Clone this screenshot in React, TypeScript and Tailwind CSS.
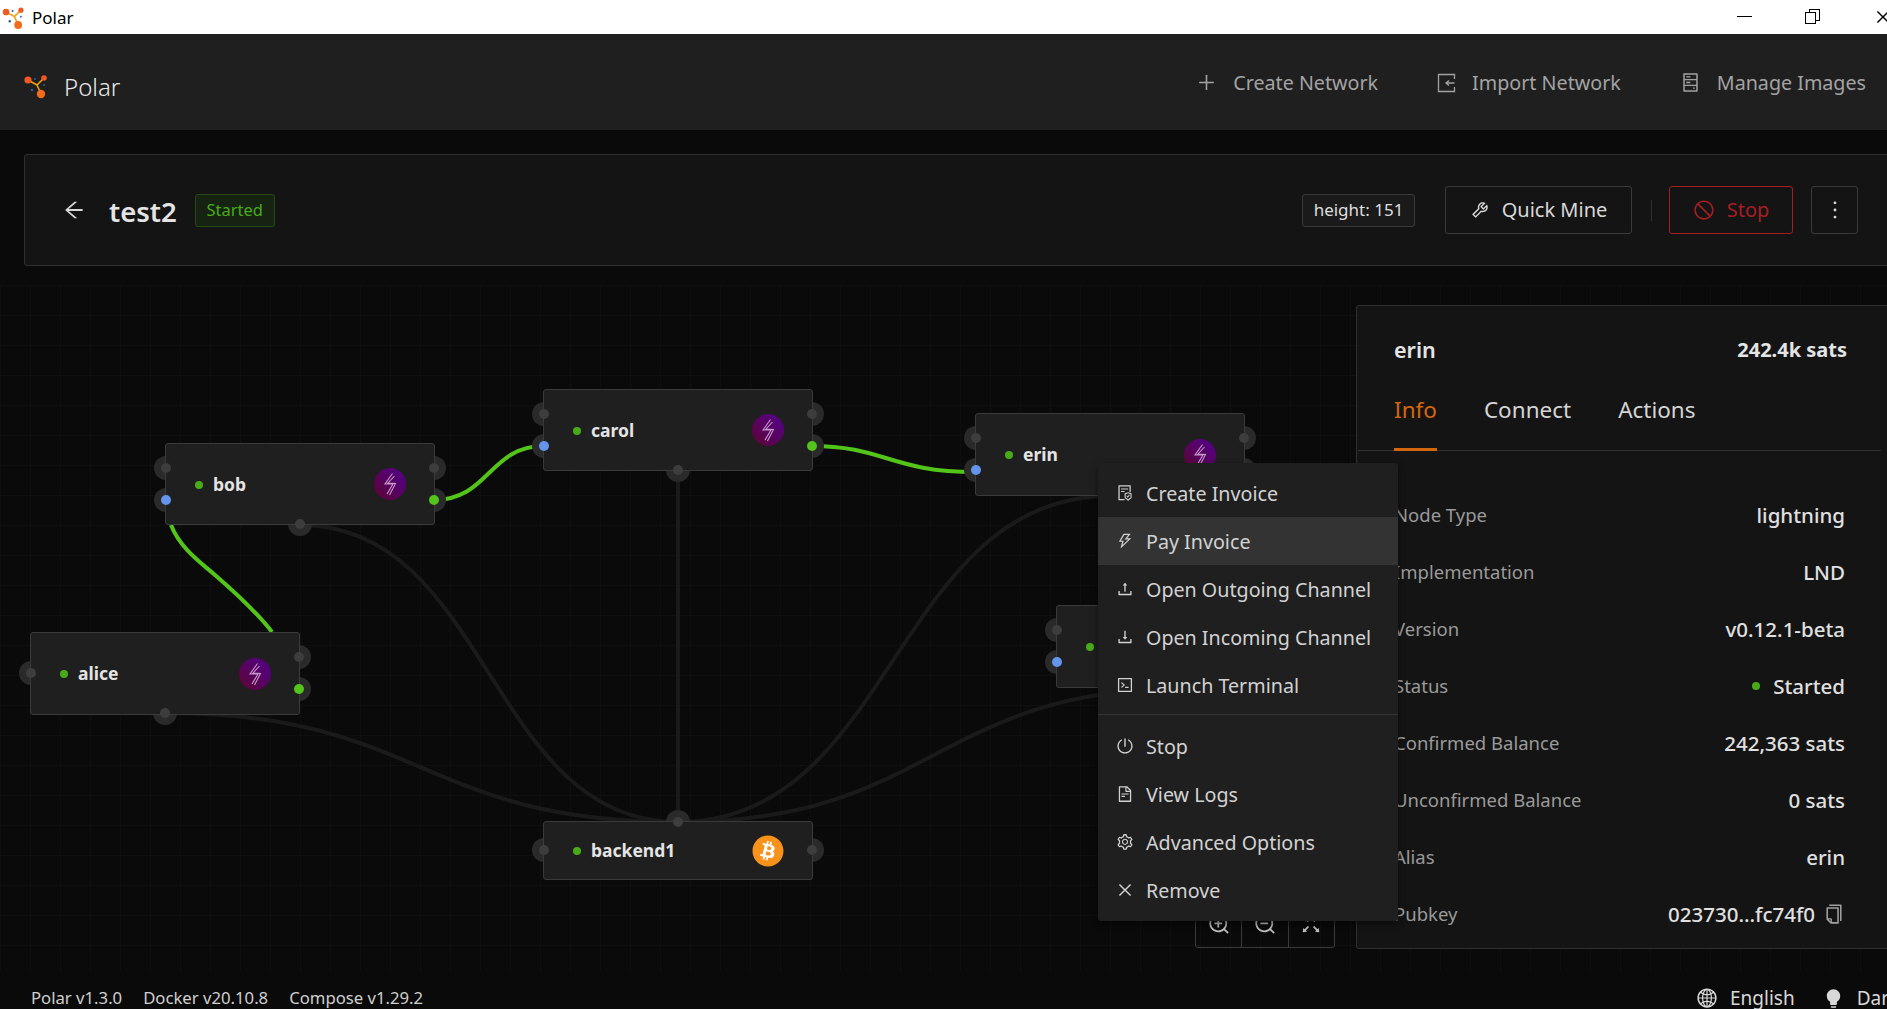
import React from "react";
import {
  AiOutlinePlus, AiOutlineHdd, AiOutlineArrowLeft, AiOutlineTool, AiOutlineStop, AiOutlineMore,
  AiOutlineFileProtect, AiOutlineThunderbolt, AiOutlineUpload, AiOutlineDownload, AiOutlineCode, AiOutlinePoweroff,
  AiOutlineFileText, AiOutlineSetting, AiOutlineClose, AiOutlineZoomIn, AiOutlineZoomOut, AiOutlineFullscreen,
  AiOutlineCopy, AiOutlineGlobal, AiFillBulb,
} from "react-icons/ai";
import { FaBitcoin } from "react-icons/fa";

function Logo({ size }: { size: number }) {
  return (
    <svg width={size} height={size} viewBox="0 0 42 42" className="shrink-0">
      <path d="M13 14 L22 19 L29 12 M22 19 L26 28" stroke="#f0a010" strokeWidth="1.6" fill="none" />
      <circle cx="13" cy="14" r="3.6" fill="#ef5a24" />
      <circle cx="29" cy="12" r="2.8" fill="#ef5a24" />
      <circle cx="26" cy="28" r="4.2" fill="#f26a1b" />
      <circle cx="20" cy="13" r="1.1" fill="#2c5aa0" />
      <circle cx="17" cy="24" r="1.3" fill="#2c5aa0" />
      <circle cx="29" cy="19" r="1" fill="#2c5aa0" />
    </svg>
  );
}

function ImportIcon({ className }: { className?: string }) {
  return (
    <svg width="19" height="20" viewBox="0 0 19 20" fill="none" stroke="currentColor" strokeWidth="1.3" className={className}>
      <path d="M17.5 6V1.5H1.5V18.5H17.5V14" />
      <path d="M17.5 10H9 M12 7.5L9 10L12 12.5" />
    </svg>
  );
}

function Bolt() {
  return (
    <svg width="32" height="32" viewBox="0 0 32 32">
      <defs>
        <linearGradient id="lnd" x1="1" y1="0" x2="0" y2="1">
          <stop offset="0" stopColor="#53008f" />
          <stop offset="1" stopColor="#5c0530" />
        </linearGradient>
      </defs>
      <circle cx="16" cy="16" r="16" fill="url(#lnd)" />
      <path d="M18.5 5.5 L11 16 L19 16 L13 26 M20.5 8 L14 15 L21.5 15.5 L15.5 27" fill="none" stroke="#c79ac9" strokeWidth="1.1" />
    </svg>
  );
}

type Kind = "gray" | "blue" | "green";
type Port = { x: number; y: number; c: Kind };
type NodeData = { name: string; x: number; y: number; h: number; ports: Port[]; btc?: boolean };

const dotColor: Record<Kind, string> = { gray: "#3d3d3d", blue: "#6495ed", green: "#52c41a" };

const lightning = (bottomX = 135): Port[] => [
  { x: 1, y: 25, c: "gray" },
  { x: 1, y: 57, c: "blue" },
  { x: 269, y: 25, c: "gray" },
  { x: 269, y: 57, c: "green" },
  { x: bottomX, y: 81, c: "gray" },
];

const nodes: NodeData[] = [
  { name: "bob", x: 165, y: 443, h: 82, ports: lightning() },
  {
    name: "alice", x: 30, y: 632, h: 83,
    ports: [
      { x: 1, y: 41, c: "gray" },
      { x: 269, y: 25, c: "gray" },
      { x: 269, y: 57, c: "green" },
      { x: 135, y: 81, c: "gray" },
    ],
  },
  { name: "carol", x: 543, y: 389, h: 82, ports: lightning() },
  { name: "erin", x: 975, y: 413, h: 83, ports: lightning() },
  { name: "dave", x: 1056, y: 605, h: 83, ports: lightning() },
  {
    name: "backend1", x: 543, y: 821, h: 59, btc: true,
    ports: [
      { x: 1, y: 29, c: "gray" },
      { x: 269, y: 29, c: "gray" },
      { x: 135, y: 1, c: "gray" },
    ],
  },
];

function FlowNode({ n }: { n: NodeData }) {
  return (
    <div className="absolute w-[270px]" style={{ left: n.x, top: n.y - 285, height: n.h }}>
      {n.ports.map((p, i) => (
        <span key={i} className="absolute w-6 h-6 rounded-full bg-[#2a2a2a]" style={{ left: p.x - 12, top: p.y - 12 }} />
      ))}
      <div className="absolute inset-0 rounded-[3px] bg-[#1f1f1f] border border-[#3a3a3a] flex items-center pl-[29px] pr-[28px]">
        <span className="w-2 h-2 rounded-full bg-[#49aa19] mt-[1px]" />
        <span className="ml-[10px] flex-1 text-[17.5px] font-bold text-[#e4e4e4] leading-none pt-[1px]">{n.name}</span>
        {n.btc ? (
          <span className="w-8 h-8 flex items-center justify-center relative">
            <span className="absolute w-6 h-6 rounded-full bg-white" />
            <FaBitcoin className="text-[32px] text-[#f7931a] absolute" />
          </span>
        ) : (
          <Bolt />
        )}
      </div>
      {n.ports.map((p, i) => (
        <span key={i} className="absolute w-[10px] h-[10px] rounded-full" style={{ left: p.x - 5, top: p.y - 5, backgroundColor: dotColor[p.c] }} />
      ))}
    </div>
  );
}

const menuTop = [
  { icon: AiOutlineFileProtect, label: "Create Invoice" },
  { icon: AiOutlineThunderbolt, label: "Pay Invoice", active: true },
  { icon: AiOutlineUpload, label: "Open Outgoing Channel" },
  { icon: AiOutlineDownload, label: "Open Incoming Channel" },
  { icon: AiOutlineCode, label: "Launch Terminal" },
];
const menuBottom = [
  { icon: AiOutlinePoweroff, label: "Stop" },
  { icon: AiOutlineFileText, label: "View Logs" },
  { icon: AiOutlineSetting, label: "Advanced Options" },
  { icon: AiOutlineClose, label: "Remove" },
];

function MenuItem({ icon: Icon, label, active }: { icon: React.ComponentType<{ className?: string }>; label: string; active?: boolean }) {
  return (
    <div className={`h-12 flex items-center pl-[18px] gap-[12px] text-[19.7px] text-[#d2d2d2] ${active ? "bg-[#333333]" : ""}`}>
      <Icon className="text-[18px] shrink-0" />
      <span className="pt-[2px]">{label}</span>
    </div>
  );
}

const rows: [string, React.ReactNode][] = [
  ["Node Type", "lightning"],
  ["Implementation", "LND"],
  ["Version", "v0.12.1-beta"],
  ["Status", <span className="flex items-center gap-[13px]"><span className="w-2 h-2 rounded-full bg-[#49aa19]" />Started</span>],
  ["Confirmed Balance", "242,363 sats"],
  ["Unconfirmed Balance", "0 sats"],
  ["Alias", "erin"],
  ["Pubkey", <span className="flex items-center gap-2">023730...fc74f0<AiOutlineCopy className="text-[22px] text-[#a0a0a0]" /></span>],
];

function NavItem({ icon: Icon, label }: { icon: React.ComponentType<{ className?: string }>; label: string }) {
  return (
    <div className="flex items-center gap-[16px]">
      <Icon className="text-[21px]" />
      <span>{label}</span>
    </div>
  );
}

export default function App() {
  return (
    <div className="w-[1887px] h-[1009px] overflow-hidden flex flex-col bg-[#0a0a0a] text-[#d8d8d8] font-['Noto_Sans','Open_Sans',sans-serif]">
      {/* Window title bar */}
      <div className="h-[34px] shrink-0 bg-white text-black flex items-center relative overflow-hidden">
        <span className="-ml-[6px] mt-[3px]"><Logo size={39} /></span>
        <span className="-ml-[1px] text-[17px] leading-none">Polar</span>
        <span className="absolute left-[1737px] top-[16px] w-[15px] h-px bg-black" />
        <span className="absolute left-[1809px] top-[9px] w-[11px] h-[12px] border border-black" />
        <span className="absolute left-[1805px] top-[12px] w-[11px] h-[12px] border border-black bg-white" />
        <AiOutlineClose className="absolute left-[1874px] top-[8px] text-[18px]" />
      </div>

      {/* Header */}
      <header className="h-[96px] shrink-0 bg-[#1f1f1f] flex items-center justify-between pl-[15px] pr-[21px]">
        <div className="flex items-center gap-[7px] mt-[10px]">
          <Logo size={42} />
          <span className="text-[24px] font-light text-[#e8e8e8] leading-none">Polar</span>
        </div>
        <div className="flex items-center gap-[59px] text-[19.7px] text-[#a3a3a3] mt-[2px]">
          <NavItem icon={AiOutlinePlus} label="Create Network" />
          <NavItem icon={ImportIcon} label="Import Network" />
          <NavItem icon={AiOutlineHdd} label="Manage Images" />
        </div>
      </header>

      {/* Network card */}
      <div className="h-[112px] shrink-0 mt-[24px] ml-[24px] w-[1880px] bg-[#141414] border border-[#303030] rounded-[3px] flex items-center pl-[37px] pr-[45px]">
        <AiOutlineArrowLeft className="text-[24px] text-[#d8d8d8]" />
        <span className="ml-[23px] text-[27.5px] font-semibold text-[#e4e4e4] leading-none mt-[3px]">test2</span>
        <span className="ml-[18px] h-[33px] w-[80px] flex items-center justify-center rounded-[3px] border border-[#274916] bg-[#162312] text-[#49aa19] text-[16.5px]">Started</span>
        <span className="ml-auto h-[33px] w-[113px] flex items-center justify-center rounded-[3px] border border-[#3a3a3a] bg-[#1a1a1a] text-[17px] text-[#dedede]">height: 151</span>
        <button className="ml-[30px] h-[48px] w-[187px] flex items-center justify-center gap-[12px] rounded-[3px] border border-[#3a3a3a] text-[20px] text-[#d8d8d8]">
          <AiOutlineTool className="text-[20px]" />Quick Mine
        </button>
        <span className="ml-[19px] w-px h-[21px] bg-[#303030]" />
        <button className="ml-[17px] h-[48px] w-[124px] flex items-center justify-center gap-[12px] rounded-[3px] border border-[#a61d24] text-[20px] text-[#a61d24]">
          <AiOutlineStop className="text-[22px]" />Stop
        </button>
        <button className="ml-[18px] h-[48px] w-[47px] flex items-center justify-center rounded-[3px] border border-[#3a3a3a] text-[#d8d8d8]">
          <AiOutlineMore className="text-[26px]" />
        </button>
      </div>

      {/* Designer canvas */}
      <main className="mt-[19px] h-[687px] shrink-0 relative bg-[#0a0a0a] bg-[linear-gradient(#0f0f0f_1px,transparent_1px),linear-gradient(90deg,#0f0f0f_1px,transparent_1px)] bg-[size:30px_30px]">
        <svg className="absolute left-0 top-0" width="1887" height="687" viewBox="0 285 1887 687" fill="none">
          <g stroke="#1a1a1a" strokeWidth="4">
            <path d="M300 525 C 489 525, 489 822, 678 822" />
            <path d="M165 713 C 421 713, 421 822, 678 822" />
            <path d="M678 471 L 678 822" />
            <path d="M1110 496 C 894 496, 894 822, 678 822" />
            <path d="M1190 688 C 934 688, 934 822, 678 822" />
          </g>
          <g stroke="#52c41a" strokeWidth="4">
            <path d="M171 525 C 180 548, 200 562, 215 575 S 255 610, 272 632" />
            <path d="M434 500 C 489 500, 489 446, 544 446" />
            <path d="M811 446 C 885 446, 890 472, 976 472" />
          </g>
        </svg>
        {nodes.map((n) => <FlowNode key={n.name} n={n} />)}

        {/* Zoom controls */}
        <div className="absolute left-[1195px] top-[615px] w-[140px] h-[48px] flex rounded-[3px] border border-[#3a3a3a] text-[#bfbfbf]">
          <div className="flex-1 flex items-center justify-center text-[24px]"><AiOutlineZoomIn /></div>
          <div className="flex-1 flex items-center justify-center text-[24px] border-l border-[#3a3a3a]"><AiOutlineZoomOut /></div>
          <div className="flex-1 flex items-center justify-center text-[24px] border-l border-[#3a3a3a]"><AiOutlineFullscreen /></div>
        </div>

        {/* Sidebar */}
        <aside className="absolute left-[1356px] top-[20px] w-[540px] h-[644px] bg-[#141414] border border-[#303030] rounded-[3px] pt-[24px]">
          <div className="flex justify-between items-center pl-[37px] pr-[48px] h-[40px]">
            <span className="text-[21.5px] font-semibold text-[#e4e4e4]">erin</span>
            <span className="text-[20px] font-bold text-[#e4e4e4]">242.4k sats</span>
          </div>
          <div className="mt-[21px] ml-[1px] mr-[14px] h-[60px] border-b border-[#303030] flex gap-[47px] pl-[36px] text-[22.5px] text-[#d4d4d4]">
            <span className="h-[60px] border-b-[3px] border-[#d4660e] text-[#d4660e] pt-[1px] leading-[36px]">Info</span>
            <span className="pt-[1px] leading-[36px]">Connect</span>
            <span className="pt-[1px] leading-[36px]">Actions</span>
          </div>
          <div className="mt-[44px] pl-[37px] pr-[50px] flex flex-col gap-[17px]">
            {rows.map(([k, v]) => (
              <div key={k} className="h-[40px] flex justify-between items-center text-[18.5px]">
                <span className="text-[#9a9a9a]">{k}</span>
                <span className="font-medium text-[20.5px] text-[#e0e0e0]">{v}</span>
              </div>
            ))}
          </div>
        </aside>

        {/* Context menu */}
        <div className="absolute left-[1098px] top-[178px] w-[300px] h-[458px] bg-[#1f1f1f] rounded-[3px] pt-[6px] shadow-[0_3px_6px_rgba(0,0,0,0.5)]">
          {menuTop.map((m) => <MenuItem key={m.label} {...m} />)}
          <div className="h-px bg-[#333333] mt-[5px] mb-[7px]" />
          {menuBottom.map((m) => <MenuItem key={m.label} {...m} />)}
        </div>
      </main>

      {/* Footer */}
      <footer className="flex-1 flex items-center justify-between pl-[31px] text-[16.7px] text-[#cfcfcf] pt-[10px] whitespace-nowrap">
        <div className="flex gap-[21px]">
          <span>Polar v1.3.0</span>
          <span>Docker v20.10.8</span>
          <span>Compose v1.29.2</span>
        </div>
        <div className="flex items-center text-[19px] text-[#d8d8d8] w-[191px] shrink-0 overflow-hidden mt-[2px]">
          <AiOutlineGlobal className="text-[22px] shrink-0" />
          <span className="ml-[12px]">English</span>
          <AiFillBulb className="text-[21px] ml-[28px] shrink-0" />
          <span className="ml-[13px]">Dark</span>
        </div>
      </footer>
    </div>
  );
}
